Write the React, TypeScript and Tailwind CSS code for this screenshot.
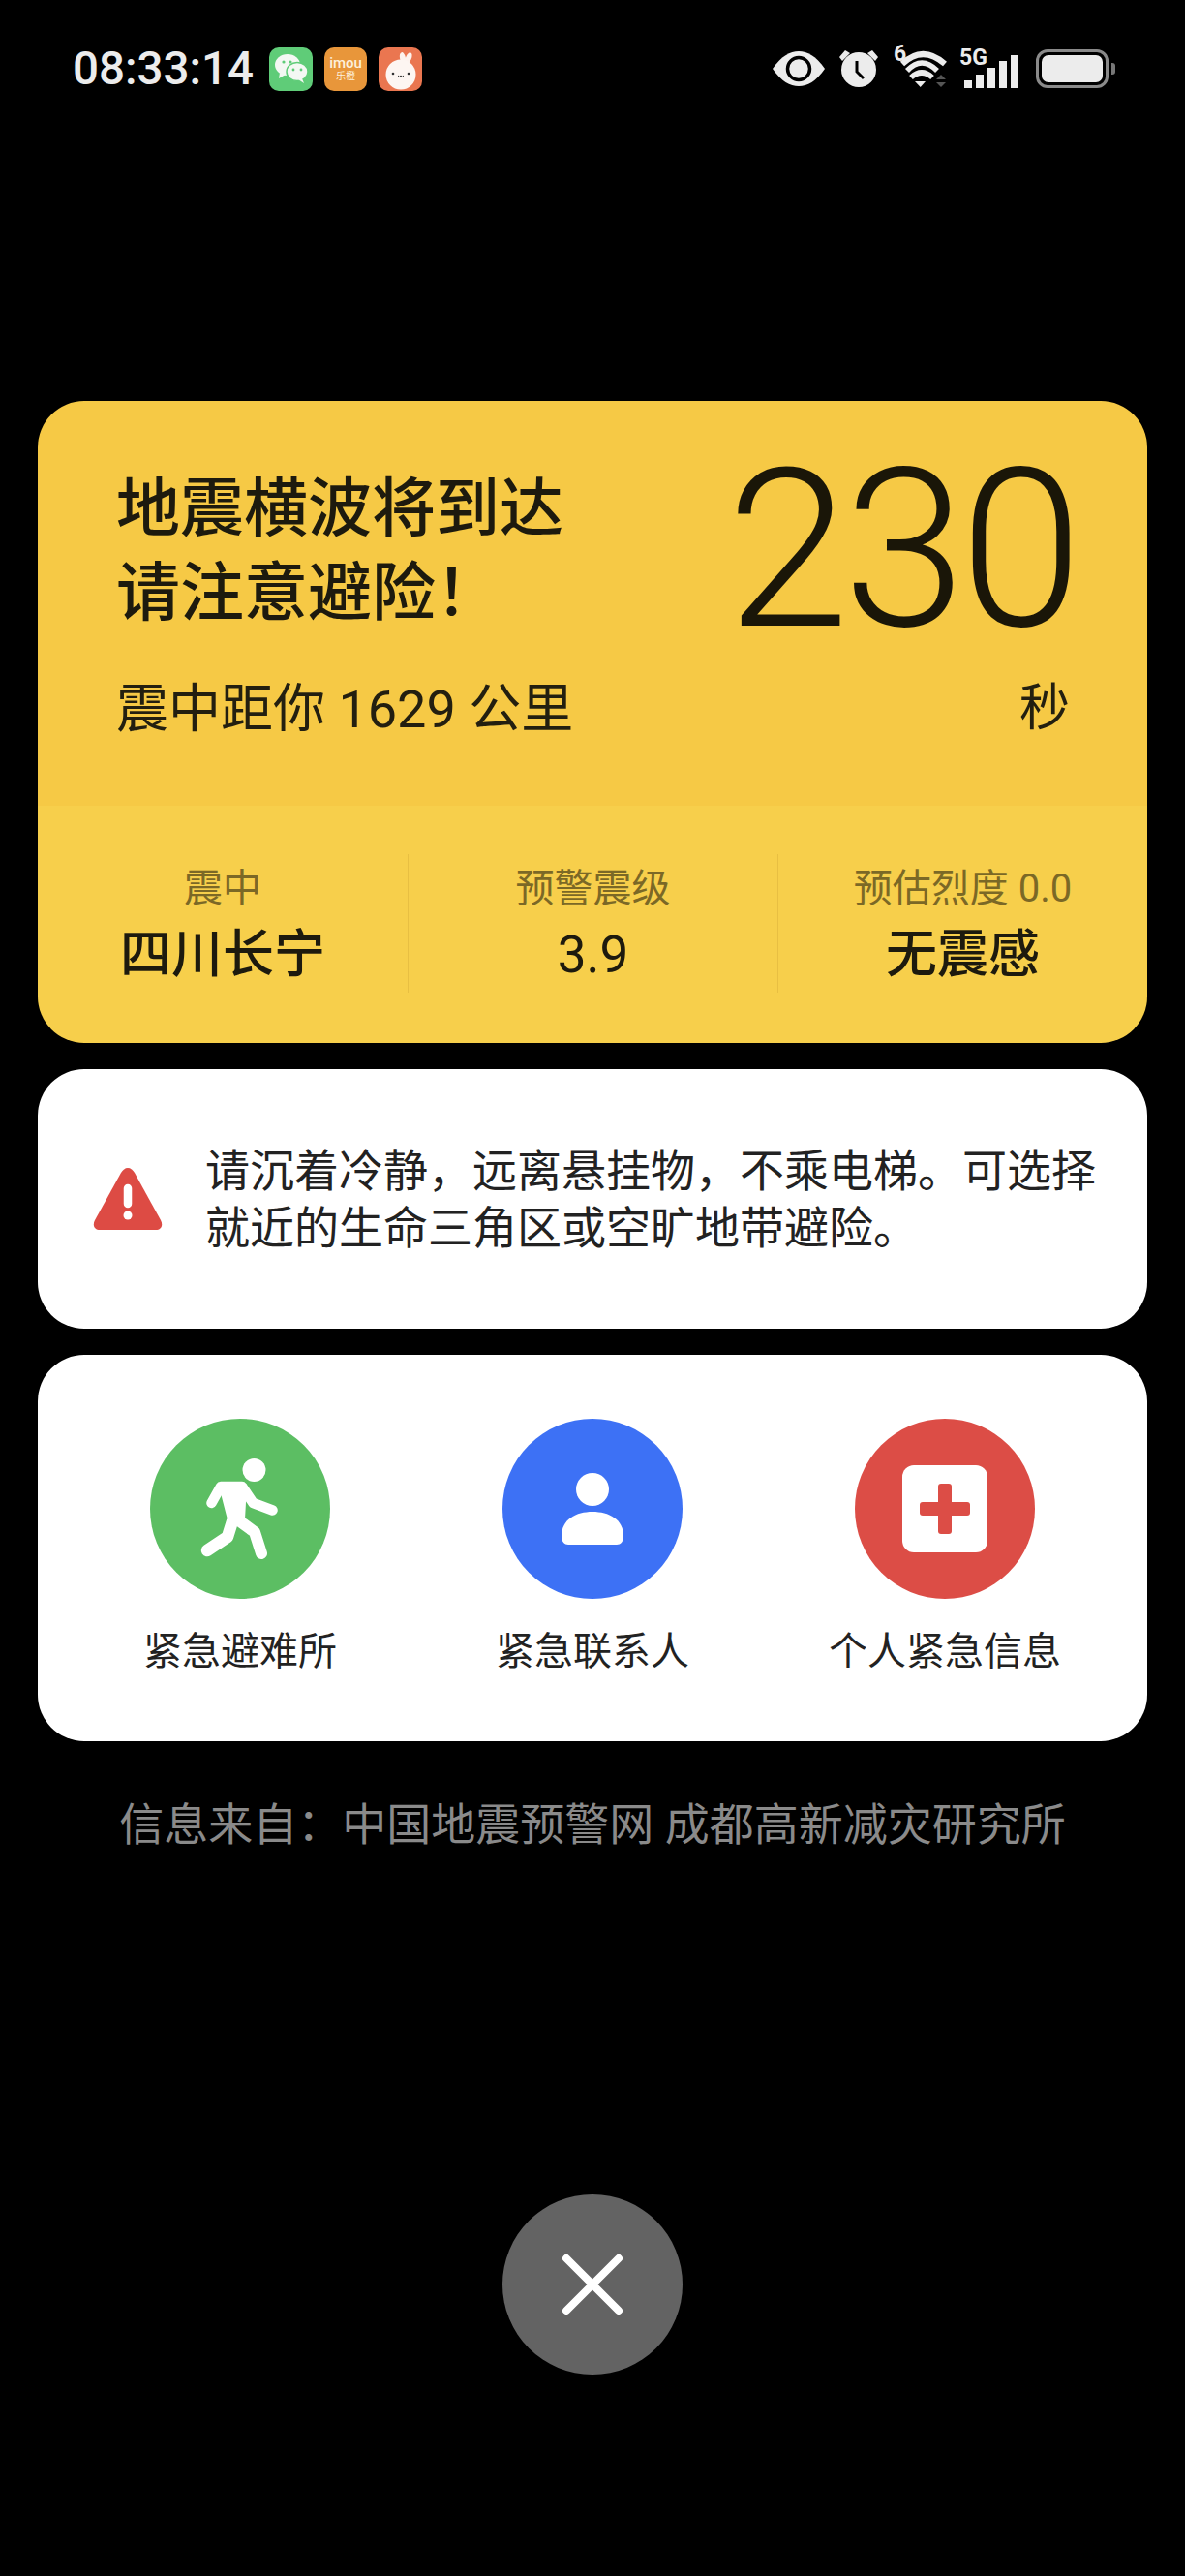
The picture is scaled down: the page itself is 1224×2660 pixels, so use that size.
import React from "react";

const font = "font-['Roboto','Noto_Sans_CJK_SC',sans-serif]";

function StatusLeft() {
  return (
    <div className="flex items-center">
      <span className="text-[47.5px] leading-[56px] font-medium text-[#ececec] w-[203px] whitespace-nowrap">08:33:14</span>
      <div className="flex gap-[12px]">
        <div className="w-[45px] h-[45px] rounded-[10px] bg-[#5fcc78] flex items-center justify-center">
          <svg width="36" height="32" viewBox="0 0 36 32">
            <ellipse cx="14" cy="12" rx="13" ry="11" fill="#f4f8f4" />
            <path d="M6 20 L5 26 L12 22Z" fill="#f4f8f4" />
            <ellipse cx="24" cy="19" rx="11" ry="9.5" fill="#f4f8f4" stroke="#5fcc78" strokeWidth="1.5" />
            <path d="M29 26 L31 31 L25 27Z" fill="#f4f8f4" />
            <circle cx="10" cy="9" r="1.6" fill="#5fcc78" />
            <circle cx="17" cy="9" r="1.6" fill="#5fcc78" />
            <circle cx="20" cy="17" r="1.4" fill="#5fcc78" />
            <circle cx="28" cy="17" r="1.4" fill="#5fcc78" />
          </svg>
        </div>
        <div className="w-[44px] h-[45px] rounded-[10px] bg-[#e8963a] flex flex-col items-center justify-center text-[#fdf0dc]">
          <span className="text-[15px] leading-[15px] font-medium">imou</span>
          <span className="text-[10px] leading-[12px]">乐橙</span>
        </div>
        <div className="w-[45px] h-[45px] rounded-[10px] bg-[#ea7650] flex items-center justify-center">
          <svg width="45" height="45" viewBox="0 0 45 45">
            <ellipse cx="25" cy="11" rx="3" ry="6" fill="#fdf3ee" transform="rotate(-12 25 11)" />
            <ellipse cx="31" cy="11" rx="3" ry="6" fill="#fdf3ee" transform="rotate(22 31 11)" />
            <circle cx="23" cy="28" r="15.5" fill="#fdf6f2" />
            <circle cx="15" cy="27" r="1.3" fill="#333" />
            <circle cx="31" cy="27" r="1.3" fill="#333" />
            <path d="M20 29 q1.5 2.5 3 0 q1.5 2.5 3 0" stroke="#333" strokeWidth="1" fill="none" />
          </svg>
        </div>
      </div>
    </div>
  );
}

function StatusRight() {
  return (
    <div className="flex items-center">
      <svg width="54" height="36" viewBox="0 0 54 36" className="mr-[14px]">
        <path d="M0 18 C9 5 18 0 27 0 C36 0 45 5 54 18 C45 31 36 36 27 36 C18 36 9 31 0 18Z" fill="#ececec" />
        <circle cx="27" cy="18" r="11.5" fill="#ececec" stroke="#000" strokeWidth="3.5" />
      </svg>
      <svg width="42" height="40" viewBox="0 0 42 40" className="mr-[15px]">
        <circle cx="21" cy="21" r="18" fill="#ececec" />
        <path d="M1 8 L7 1 L12 4 L4 12Z" fill="#ececec" />
        <path d="M41 8 L35 1 L30 4 L38 12Z" fill="#ececec" />
        <path d="M19 12 V23 L26 30" stroke="#000" strokeWidth="3" fill="none" />
      </svg>
      <div className="relative w-[54px] h-[42px] mr-[14px]">
        <span className="absolute left-0 top-[-7px] text-[23px] leading-[26px] font-bold text-[#ececec]">6</span>
        <svg width="56" height="42" viewBox="0 0 56 42" className="absolute left-0 top-0">
          <path d="M9 16 Q30 -4 53 16" stroke="#ececec" strokeWidth="6" fill="none" />
          <path d="M14 23 Q29 7 45 23" stroke="#ececec" strokeWidth="5.5" fill="none" />
          <path d="M18 30 Q29 20 40 30" stroke="#ececec" strokeWidth="5.5" fill="none" />
          <path d="M22 34 L33 34 L27.7 40Z" fill="#ececec" />
          <path d="M44 32 L54 32 L49 27Z" fill="#555" />
          <path d="M44 35 L54 35 L49 40Z" fill="#555" />
        </svg>
      </div>
      <div className="relative w-[62px] h-[40px] mr-[17px]">
        <span className="absolute left-0 top-[-4px] text-[23px] leading-[26px] font-bold text-[#ececec]">5G</span>
        <div className="absolute left-[5px] right-0 bottom-0 flex items-end gap-[4px] h-full">
          <div className="w-[8px] h-[8px] bg-[#ececec]" />
          <div className="w-[8px] h-[14px] bg-[#ececec]" />
          <div className="w-[8px] h-[21px] bg-[#ececec]" />
          <div className="w-[8px] h-[28px] bg-[#ececec]" />
          <div className="w-[8px] h-[34px] bg-[#ececec]" />
        </div>
      </div>
      <div className="w-[75px] h-[40px] rounded-[12px] border-[3px] border-[#8a8a8a] p-[3px]">
        <div className="w-full h-full rounded-[7px] bg-[#ececec]" />
      </div>
      <div className="w-[4px] h-[12px] rounded-r-[3px] bg-[#777] ml-[3px]" />
    </div>
  );
}

function Stat({ label, value, first, medium }: { label: string; value: string; first?: boolean; medium?: boolean }) {
  return (
    <div className={`flex flex-col items-center ${first ? "" : "border-l border-[#e8bf42]"}`}>
      <span className="text-[40px] leading-[48px] text-[#7b6826] mt-[12px]">{label}</span>
      <span className={`text-[53px] leading-[62px] text-[#1d1a0e] mt-[13px] ${medium ? "font-medium" : "font-normal"}`}>{value}</span>
    </div>
  );
}

function Action({ color, label, children }: { color: string; label: string; children: React.ReactNode }) {
  return (
    <div className="flex flex-col items-center w-[364px]">
      <div className={`w-[186px] h-[186px] rounded-full flex items-center justify-center ${color}`}>{children}</div>
      <span className="text-[40px] leading-[48px] text-[#222] mt-[31px] whitespace-nowrap">{label}</span>
    </div>
  );
}

export default function App() {
  return (
    <div className={`w-[1224px] h-[2660px] bg-black flex flex-col ${font}`}>
      <div className="flex items-center justify-between h-[70px] mt-[36px] pl-[75px] pr-[72px]">
        <StatusLeft />
        <StatusRight />
      </div>

      <div className="mx-[39px] mt-[308px] flex flex-col gap-[27px]">
        <div className="rounded-[48px] overflow-hidden">
          <div className="h-[418px] bg-[#f6c945] pl-[81px] pr-[80px] flex justify-between">
            <div className="flex flex-col pt-[68px]">
              <div className="text-[66px] leading-[87px] font-medium text-[#1d1a0e]">
                <div>地震横波将到达</div>
                <div>请注意避险！</div>
              </div>
              <div className="text-[54px] leading-[64px] text-[#231f10] mt-[45px] font-normal whitespace-nowrap">震中距你 1629 公里</div>
            </div>
            <div className="flex flex-col items-end pt-[23px]">
              <div className="text-[228px] leading-[262px] font-light text-[#1a1608] tracking-[-6px] mr-[-7px]">230</div>
              <div className="text-[52px] leading-[64px] text-[#231f10] mt-[1px]">秒</div>
            </div>
          </div>
          <div className="h-[245px] bg-[#f7cf4b] pt-[50px]">
            <div className="h-[143px] grid grid-cols-3">
              <Stat first label="震中" value="四川长宁" medium />
              <Stat label="预警震级" value="3.9" />
              <Stat label="预估烈度 0.0" value="无震感" medium />
            </div>
          </div>
        </div>

        <div className="h-[268px] rounded-[48px] bg-white flex items-center pl-[57px]">
          <svg width="72" height="66" viewBox="0 0 72 66" className="shrink-0">
            <path d="M36 1 C39 1 41 3 43 6 L70 55 C73 61 70 65 65 65 L7 65 C2 65 -1 61 2 55 L29 6 C31 3 33 1 36 1Z" fill="#dd4b44" />
            <path d="M36 22 V38" stroke="#fff" strokeWidth="8.5" strokeLinecap="round" />
            <circle cx="36" cy="50" r="4.5" fill="#fff" />
          </svg>
          <div className="ml-[44px] mt-[2px] text-[46px] leading-[59px] text-[#222] whitespace-nowrap">
            <div>请沉着冷静，远离悬挂物，不乘电梯。可选择</div>
            <div>就近的生命三角区或空旷地带避险。</div>
          </div>
        </div>

        <div className="h-[399px] rounded-[48px] bg-white flex justify-center pt-[66px]">
          <div className="flex justify-center gap-0">
            <Action color="bg-[#5cbe63]" label="紧急避难所">
              <svg width="186" height="186" viewBox="0 0 186 186" className="shrink-0">
                <circle cx="107.5" cy="53" r="12" fill="#fff" />
                <path d="M63.5 87 L73 70 L95 70 L106.5 87 L126.5 94.5" stroke="#fff" strokeWidth="10.5" strokeLinecap="round" strokeLinejoin="round" fill="none" />
                <path d="M73 69 L98 69 L96 104 L82 104Z" fill="#fff" stroke="#fff" strokeWidth="4" strokeLinejoin="round" />
                <path d="M90 104 L108 117 L115 139" stroke="#fff" strokeWidth="12" strokeLinecap="round" strokeLinejoin="round" fill="none" />
                <path d="M85 106 L80 122 L59 136" stroke="#fff" strokeWidth="12.5" strokeLinecap="round" strokeLinejoin="round" fill="none" />
              </svg>
            </Action>
            <Action color="bg-[#3d71f5]" label="紧急联系人">
              <svg width="66" height="76" viewBox="0 0 66 76">
                <circle cx="33" cy="18" r="17" fill="#fff" />
                <path d="M1 66 C1 49 16 41 33 41 C50 41 65 49 65 66 C65 72 62 75 58 75 L8 75 C4 75 1 72 1 66Z" fill="#fff" />
              </svg>
            </Action>
            <Action color="bg-[#dc4d46]" label="个人紧急信息">
              <div className="w-[88px] h-[90px] rounded-[12px] bg-white flex items-center justify-center">
                <svg width="52" height="52" viewBox="0 0 52 52">
                  <rect x="19" y="0" width="14" height="52" rx="3" fill="#dc4d46" />
                  <rect x="0" y="19" width="52" height="14" rx="3" fill="#dc4d46" />
                </svg>
              </div>
            </Action>
          </div>
        </div>
      </div>

      <div className="text-center text-[46px] leading-[56px] text-[#8a8a8a] mt-[58px] whitespace-nowrap">信息来自：中国地震预警网 成都高新减灾研究所</div>

      <div className="mt-[354px] flex justify-center">
        <div className="w-[186px] h-[186px] rounded-full bg-[#636363] flex items-center justify-center">
          <svg width="66" height="66" viewBox="0 0 66 66">
            <path d="M6 6 L60 60 M60 6 L6 60" stroke="#fff" strokeWidth="8" strokeLinecap="round" />
          </svg>
        </div>
      </div>
    </div>
  );
}
